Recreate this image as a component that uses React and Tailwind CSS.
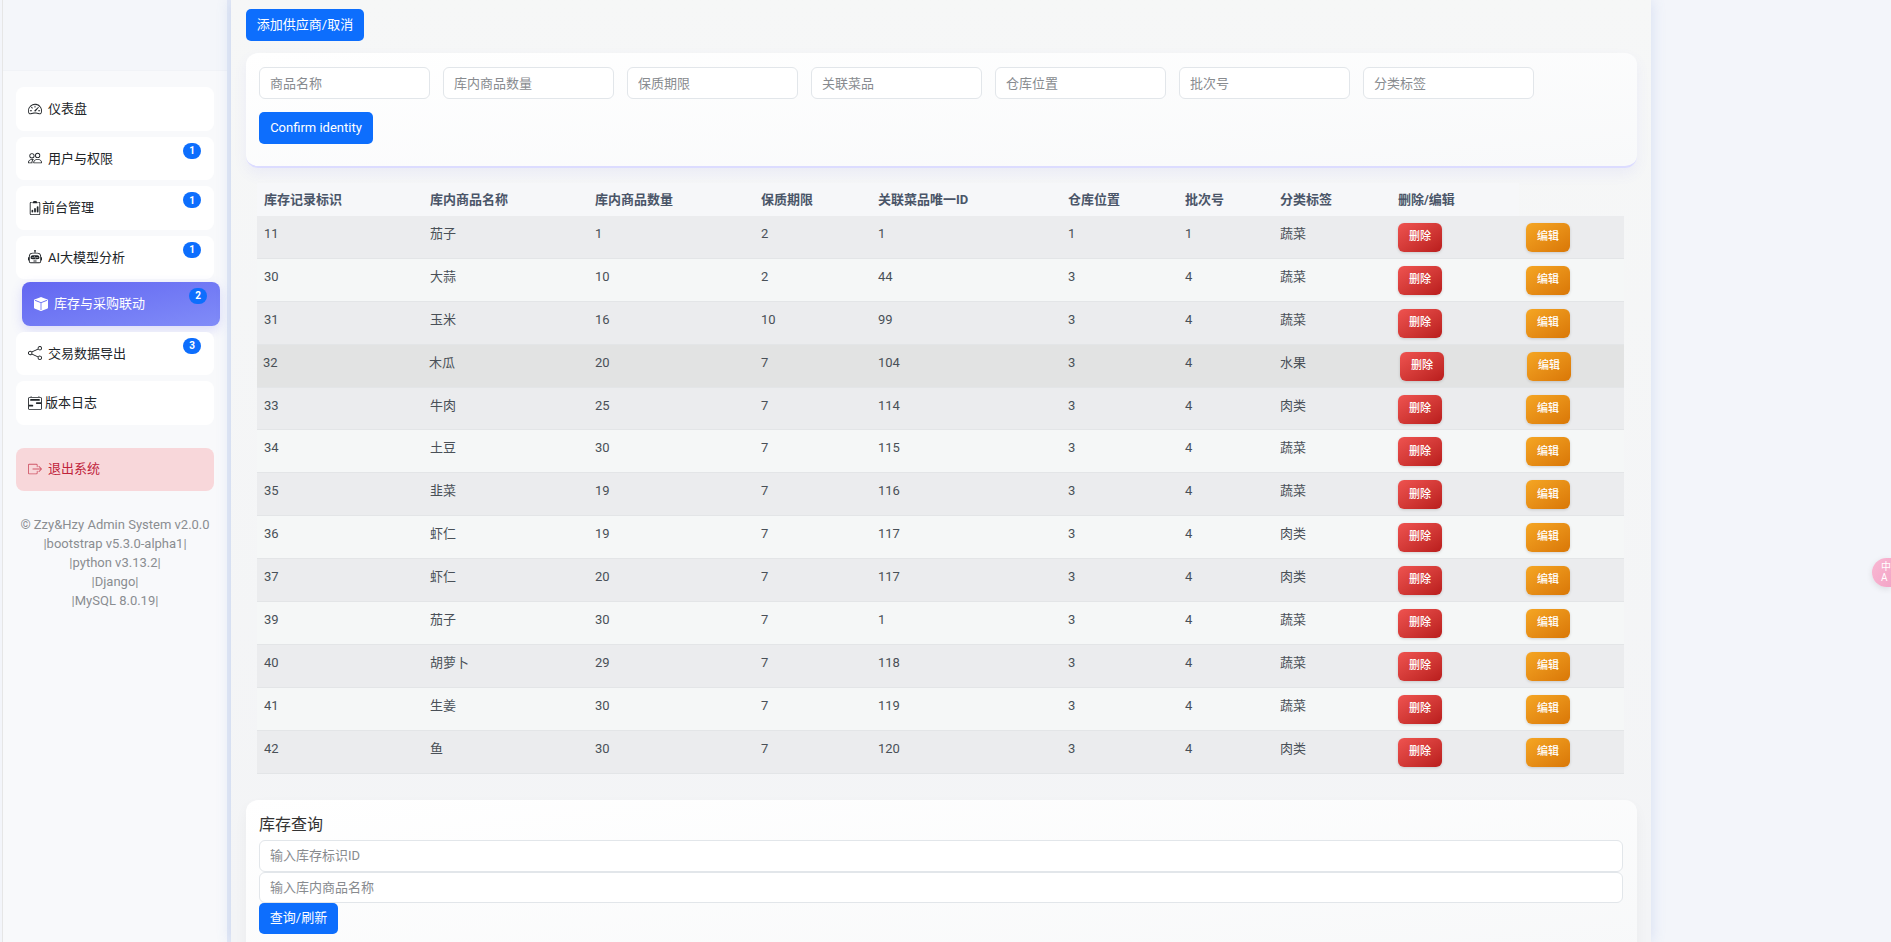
import React from 'react';
import {
  BsSpeedometer2,
  BsPeople,
  BsClipboard2Data,
  BsRobot,
  BsBoxFill,
  BsShare,
  BsCalendar2Range,
  BsBoxArrowRight,
} from 'react-icons/bs';

const navTop = [
  { label: '仪表盘', icon: BsSpeedometer2, gap: 'mr-[6px]' },
  { label: '用户与权限', icon: BsPeople, gap: 'mr-[6px]', badge: 1 },
  { label: '前台管理', icon: BsClipboard2Data, gap: 'mr-0', badge: 1 },
  { label: 'AI大模型分析', icon: BsRobot, gap: 'mr-[6px]', badge: 1 },
];

const rows = [
  ['11', '茄子', '1', '2', '1', '1', '1', '蔬菜'],
  ['30', '大蒜', '10', '2', '44', '3', '4', '蔬菜'],
  ['31', '玉米', '16', '10', '99', '3', '4', '蔬菜'],
  ['32', '木瓜', '20', '7', '104', '3', '4', '水果'],
  ['33', '牛肉', '25', '7', '114', '3', '4', '肉类'],
  ['34', '土豆', '30', '7', '115', '3', '4', '蔬菜'],
  ['35', '韭菜', '19', '7', '116', '3', '4', '蔬菜'],
  ['36', '虾仁', '19', '7', '117', '3', '4', '肉类'],
  ['37', '虾仁', '20', '7', '117', '3', '4', '肉类'],
  ['39', '茄子', '30', '7', '1', '3', '4', '蔬菜'],
  ['40', '胡萝卜', '29', '7', '118', '3', '4', '蔬菜'],
  ['41', '生姜', '30', '7', '119', '3', '4', '蔬菜'],
  ['42', '鱼', '30', '7', '120', '3', '4', '肉类'],
];

const headers = ['库存记录标识', '库内商品名称', '库内商品数量', '保质期限', '关联菜品唯一ID', '仓库位置', '批次号', '分类标签', '删除/编辑'];
const addFields = ['商品名称', '库内商品数量', '保质期限', '关联菜品', '仓库位置', '批次号', '分类标签'];

const Badge = ({ value, className = 'right-[13px] top-[6px]' }) => (
  <span className={`absolute ${className} flex h-[16px] w-[18px] items-center justify-center rounded-full bg-[#0d6efd] text-[10px] font-bold text-white`}>
    {value}
  </span>
);

const NavItem = ({ label, icon: Icon, gap = 'mr-[6px]', badge, className = 'mb-[6px]' }) => (
  <a className={`relative flex h-[43.5px] items-center rounded-[8px] bg-white pl-[12px] text-[13px] text-[#212529] ${className}`}>
    <Icon className={`h-[14px] w-[14px] ${gap}`} />
    {label}
    {badge && <Badge value={badge} />}
  </a>
);

const Sidebar = () => (
  <aside className="ml-[2px] h-full w-[229px] shrink-0 border-l border-r-[4px] border-l-[#e6e6e6] border-r-[#e5eaf6] bg-[#f8f9fb]">
    <div className="h-[71px] border-b border-[#f1f3f7] bg-[#f4f6fa]" />
    <nav className="px-[13px] pt-[16px]">
      {navTop.map((item, i) => (
        <NavItem key={item.label} {...item} className={i === 3 ? 'mb-[2.5px]' : 'mb-[6px]'} />
      ))}
      <a className="relative mb-[6px] ml-[6px] mr-[-6px] flex h-[44px] items-center rounded-[8px] bg-linear-to-br from-[#6366f1] to-[#818cf8] pl-[12px] text-[13px] text-white shadow-[0_4px_12px_rgba(99,102,241,0.2)]">
        <BsBoxFill className="mr-[6px] h-[14px] w-[14px]" />
        库存与采购联动
        <Badge value={2} />
      </a>
      <NavItem label="交易数据导出" icon={BsShare} badge={3} />
      <NavItem label="版本日志" icon={BsCalendar2Range} gap="mr-[3px]" />
      <a className="mt-[23px] flex h-[43px] items-center rounded-[8px] bg-[#f8d7da] pl-[12px] text-[13px] text-[#c0233a]">
        <BsBoxArrowRight className="mr-[6px] h-[14px] w-[14px] opacity-70" />
        退出系统
      </a>
      <p className="mt-[24px] text-center text-[13px] leading-[19px] text-[#8a8d91]">
        © Zzy&amp;Hzy Admin System v2.0.0
        <br />|bootstrap v5.3.0-alpha1|
        <br />|python v3.13.2|
        <br />|Django|
        <br />|MySQL 8.0.19|
      </p>
    </nav>
  </aside>
);

const ActionButton = ({ children, className }) => (
  <button className={`h-[29px] w-[44px] rounded-[6px] text-[11px] font-medium text-white shadow-[0_1px_3px_rgba(0,0,0,0.15)] ${className}`}>
    {children}
  </button>
);

const StockTable = () => (
  <table className="ml-[11px] mt-[15px] w-[1367px] table-fixed border-collapse text-[13px] text-[#495057]">
    <colgroup>
      <col className="w-[166px]" />
      <col className="w-[165px]" />
      <col className="w-[166px]" />
      <col className="w-[117px]" />
      <col className="w-[190px]" />
      <col className="w-[117px]" />
      <col className="w-[95px]" />
      <col className="w-[118px]" />
      <col className="w-[128px]" />
      <col className="w-[105px]" />
    </colgroup>
    <thead>
      <tr className="h-[32.5px]">
        {headers.map((h) => (
          <th key={h} className="bg-[#f6f7f9] px-[7px] text-left font-bold text-[#4a5568]">{h}</th>
        ))}
      </tr>
    </thead>
    <tbody>
      {rows.map((row, i) => {
        const hovered = row[0] === '32';
        const bg = hovered ? 'bg-[#e2e3e3]' : i % 2 === 0 ? 'bg-[#ebecee]' : 'bg-[#f5f7f7]';
        return (
          <tr key={row[0]} className={`h-[42.9px] border-b border-[#e3e5e7] ${bg}`}>
            {row.map((cell, j) => (
              <td key={j} className={`py-0 pr-[7px] pt-[7px] align-top leading-[21px] ${hovered && j < 2 ? 'pl-[6px]' : 'pl-[7px]'}`}>{cell}</td>
            ))}
            <td className="px-[7px] pt-[7px] align-top">
              <ActionButton className={`bg-linear-to-br from-[#ef5350] to-[#b91c1c] ${hovered ? 'ml-[2px]' : ''}`}>删除</ActionButton>
            </td>
            <td className="px-[7px] pt-[7px] align-top">
              <ActionButton className={`bg-linear-to-br from-[#f5a623] to-[#d97706] ${hovered ? 'ml-[1px]' : ''}`}>编辑</ActionButton>
            </td>
          </tr>
        );
      })}
    </tbody>
  </table>
);

const TextInput = ({ placeholder, className }) => (
  <input
    placeholder={placeholder}
    className={`rounded-[6px] border-[1.5px] border-[#e2e6ea] bg-white px-[10px] text-[13px] outline-none placeholder:text-[#888b8f] ${className}`}
  />
);

const BlueButton = ({ children, className = '' }) => (
  <button className={`rounded-[5px] bg-[#0d6efd] text-[13px] text-white ${className}`}>{children}</button>
);

const Main = () => (
  <main className="relative z-10 h-full w-[1420px] shrink-0 overflow-hidden bg-linear-to-b from-[#f6f7f7] to-[#f3f4f6] pl-[15px] shadow-[0_0_14px_rgba(90,130,210,0.2)]">
    <h2 className="mt-[-20px] h-[29px] text-[16px] leading-[22px] text-[#333]">库存信息(表)</h2>
    <BlueButton className="h-[32px] w-[118px]">添加供应商/取消</BlueButton>
    <section className="mt-[12px] h-[115px] w-[1391px] rounded-[12px] border-b-[2px] border-[#dcdcff] bg-linear-to-br from-white to-[#f8f9fa] px-[13px] pt-[14px] shadow-[0_6px_14px_rgba(99,102,241,0.07)]">
      <div className="flex gap-[13px]">
        {addFields.map((f) => (
          <TextInput key={f} placeholder={f} className="h-[32px] w-[171px]" />
        ))}
      </div>
      <BlueButton className="mt-[13px] h-[32px] w-[114px]">Confirm identity</BlueButton>
    </section>
    <StockTable />
    <section className="mt-[26px] h-[160px] w-[1391px] rounded-[12px] bg-linear-to-br from-white to-[#f7f8f9] px-[13px] pt-[12px] shadow-[0_6px_14px_rgba(0,0,0,0.04)]">
      <h3 className="text-[16px] leading-[26px] text-[#333]">库存查询</h3>
      <TextInput placeholder="输入库存标识ID" className="mt-[2px] block h-[32px] w-[1364px]" />
      <TextInput placeholder="输入库内商品名称" className="block h-[31px] w-[1364px]" />
      <BlueButton className="block h-[31px] w-[79px]">查询/刷新</BlueButton>
    </section>
  </main>
);

export default function App() {
  return (
    <div className="relative flex h-[942px] w-full overflow-hidden bg-[#f3f5fa] font-['Roboto','Noto_Sans_CJK_SC',sans-serif]">
      <Sidebar />
      <Main />
      {/* floating translate tab */}
      <div className="absolute right-0 top-[558px] flex h-[29px] w-[19px] flex-col overflow-hidden rounded-l-full bg-linear-to-br from-[#f9b8d3] to-[#f3a5c7] pl-[9px] pt-[3px] text-[10px] leading-[11px] text-white shadow-[0_2px_6px_rgba(0,0,0,0.1)]">
        <span>中</span>
        <span>A</span>
      </div>
    </div>
  );
}
